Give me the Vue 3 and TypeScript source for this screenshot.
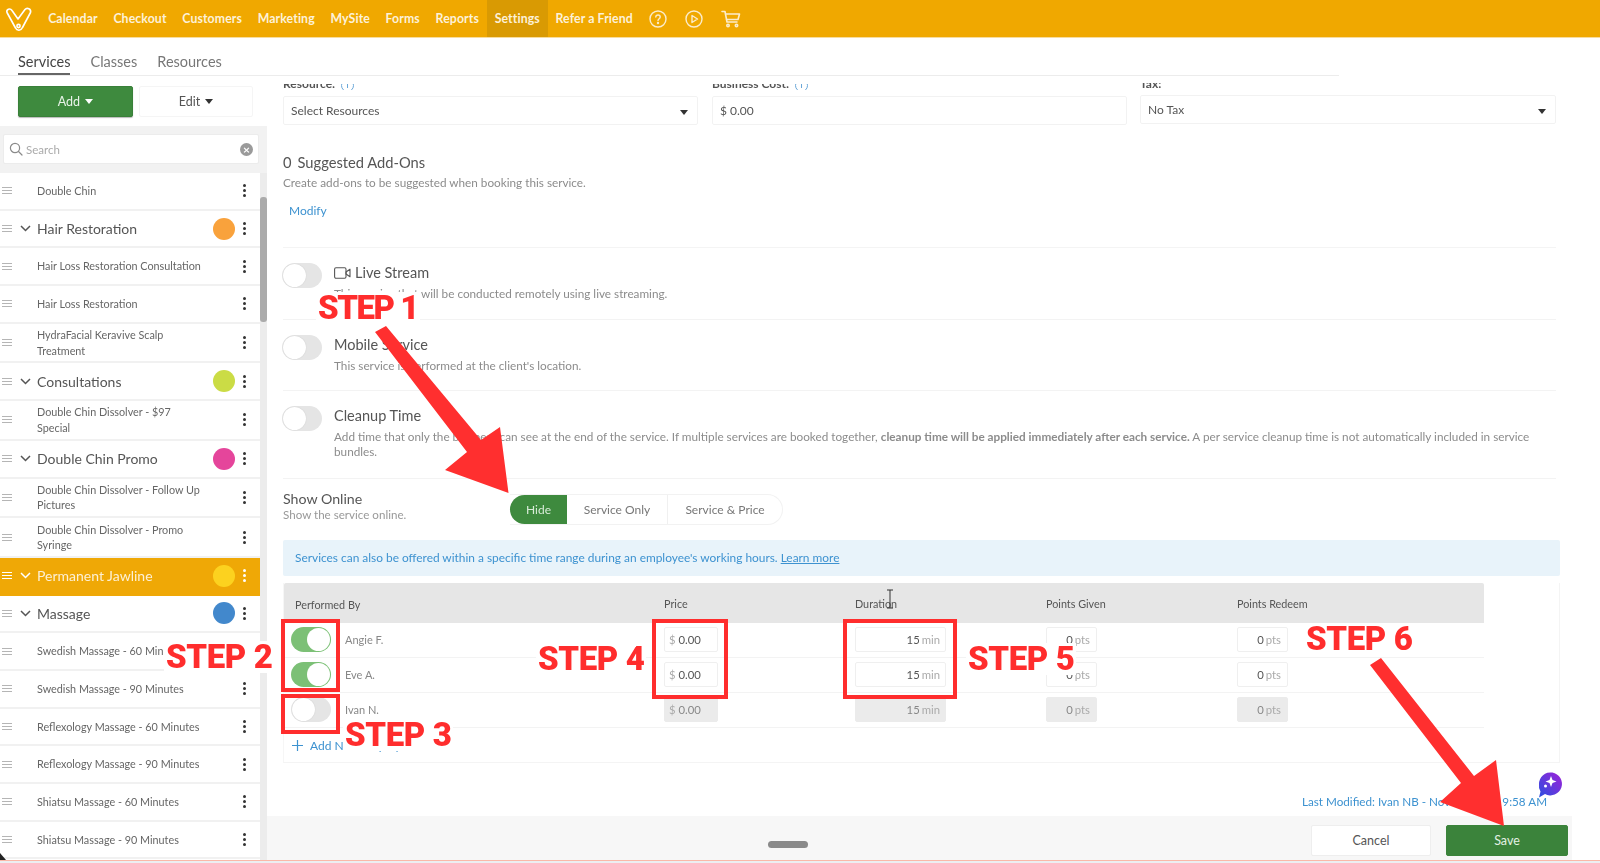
<script setup lang="ts">
interface Row { label: string; group?: boolean; color?: string; active?: boolean; tall?: boolean }
const navItems = ['Calendar', 'Checkout', 'Customers', 'Marketing', 'MySite', 'Forms', 'Reports', 'Settings', 'Refer a Friend']
const rows: Row[] = [
  { label: 'Double Chin' },
  { label: 'Hair Restoration', group: true, color: '#f9a23c' },
  { label: 'Hair Loss Restoration Consultation' },
  { label: 'Hair Loss Restoration' },
  { label: 'HydraFacial Keravive Scalp Treatment', tall: true },
  { label: 'Consultations', group: true, color: '#cbdc45' },
  { label: 'Double Chin Dissolver - $97 Special', tall: true },
  { label: 'Double Chin Promo', group: true, color: '#e5459b' },
  { label: 'Double Chin Dissolver - Follow Up Pictures', tall: true },
  { label: 'Double Chin Dissolver - Promo Syringe', tall: true },
  { label: 'Permanent Jawline', group: true, color: '#fcd21f', active: true },
  { label: 'Massage', group: true, color: '#4288cc' },
  { label: 'Swedish Massage - 60 Minutes' },
  { label: 'Swedish Massage - 90 Minutes' },
  { label: 'Reflexology Massage - 60 Minutes' },
  { label: 'Reflexology Massage - 90 Minutes' },
  { label: 'Shiatsu Massage - 60 Minutes' },
  { label: 'Shiatsu Massage - 90 Minutes' },
]
const staff = [
  { name: 'Angie F.', on: true },
  { name: 'Eve A.', on: true },
  { name: 'Ivan N.', on: false },
]
const steps = [
  { id: 's1', text: 'STEP 1' },
  { id: 's2', text: 'STEP 2' },
  { id: 's3', text: 'STEP 3' },
  { id: 's4', text: 'STEP 4' },
  { id: 's5', text: 'STEP 5' },
  { id: 's6', text: 'STEP 6' },
]
const boxes = ['b1', 'b2', 'b3', 'b4']
</script>

<template>
  <div class="page">
    <div class="base">
      <header class="topbar">
        <svg class="logo" width="30" height="26" viewBox="0 0 30 26" fill="none" stroke="#fff" stroke-width="1.6" stroke-linejoin="round" stroke-linecap="round">
          <path d="M3 6.5C2 3.5 6 1.5 8 4.5L14 13L21 3.5C23 1 27.5 3 26.5 6.5L18.5 21.5C17 25 13 25 11.5 22Z" />
          <circle cx="14.5" cy="20" r="1.6" />
        </svg>
        <nav class="nav">
          <a v-for="n in navItems" :key="n" class="nav-item" :class="{ current: n === 'Settings' }">{{ n }}</a>
        </nav>
        <div class="nav-icons">
          <svg width="18" height="18" viewBox="0 0 18 18" fill="none" stroke="#fbeccb" stroke-width="1.4" stroke-linecap="round">
            <circle cx="9" cy="9" r="8" />
            <path d="M6.8 7C6.9 4.4 11.2 4.4 11.2 7C11.2 8.8 9 8.6 9 10.6" />
            <circle cx="9" cy="13" r=".5" />
          </svg>
          <svg width="18" height="18" viewBox="0 0 18 18" fill="none" stroke="#fbeccb" stroke-width="1.4" stroke-linejoin="round">
            <circle cx="9" cy="9" r="8" />
            <path d="M7 5.5L12.5 9L7 12.5Z" />
          </svg>
          <svg width="20" height="18" viewBox="0 0 20 18" fill="none" stroke="#fbeccb" stroke-width="1.6" stroke-linejoin="round" stroke-linecap="round">
            <path d="M1 1.5H4L6 12H16" />
            <path d="M4.6 4H18.5L17 9.5H5.6" />
            <circle cx="7" cy="15.5" r="1.2" />
            <circle cx="15.5" cy="15.5" r="1.2" />
          </svg>
        </div>
      </header>

      <div class="tabs">
        <a class="tab selected">Services</a>
        <a class="tab">Classes</a>
        <a class="tab">Resources</a>
      </div>

      <div class="body">
        <aside class="sidebar">
          <div class="actions">
            <button class="btn-add">Add <span class="caret"></span></button>
            <button class="btn-edit">Edit <span class="caret dark"></span></button>
          </div>
          <div class="search-wrap">
            <div class="search">
              <svg width="14" height="14" viewBox="0 0 14 14" fill="none" stroke="#8a8a8a" stroke-width="1.2" stroke-linecap="round">
                <circle cx="6" cy="6" r="4.6" />
                <path d="M9.5 9.5L13 13" />
              </svg>
              <span class="search-text">Search</span>
              <span class="clear">×</span>
            </div>
          </div>
          <div class="list-wrap">
            <ul class="list">
              <li v-for="r in rows" :key="r.label" class="row" :class="{ group: r.group, active: r.active, tall: r.tall }">
                <span class="grip"><i></i><i></i><i></i></span>
                <svg v-if="r.group" class="chev" width="11" height="7" viewBox="0 0 11 7" fill="none" stroke="currentColor" stroke-width="1.5">
                  <path d="M1 1L5.5 5.5L10 1" />
                </svg>
                <span class="row-label">{{ r.label }}</span>
                <span v-if="r.color" class="dot" :style="{ background: r.color }"></span>
                <span class="kebab"><i></i><i></i><i></i></span>
              </li>
            </ul>
            <div class="track"><div class="thumb"></div></div>
          </div>
        </aside>

        <main class="main">
          <div class="content">
            <div class="fields">
              <div class="field f-res">
                <div class="clip"><span class="lab">Resource: <span class="info">i</span></span></div>
                <div class="input">Select Resources<span class="caret dark end"></span></div>
              </div>
              <div class="field f-cost">
                <div class="clip"><span class="lab">Business Cost: <span class="info">i</span></span></div>
                <div class="input">$ 0.00</div>
              </div>
              <div class="field f-tax">
                <div class="clip"><span class="lab">Tax:</span></div>
                <div class="input">No Tax<span class="caret dark end"></span></div>
              </div>
            </div>

            <h3 class="addons"><span class="count">0</span>Suggested Add-Ons</h3>
            <p class="desc addons-d">Create add-ons to be suggested when booking this service.</p>
            <a class="modify">Modify</a>
            <div class="rule first"></div>

            <section class="option">
              <span class="toggle"></span>
              <div>
                <div class="opt-title">
                  <svg width="17" height="12" viewBox="0 0 17 12" fill="none" stroke="#555" stroke-width="1.1" stroke-linejoin="round">
                    <rect x=".6" y=".8" width="11.4" height="10.4" rx="1.4" />
                    <path d="M12 5L16 2.2V9.8L12 7Z" />
                  </svg>
                  Live Stream
                </div>
                <p class="desc">This service that will be conducted remotely using live streaming.</p>
              </div>
            </section>
            <section class="option">
              <span class="toggle"></span>
              <div>
                <div class="opt-title">Mobile Service</div>
                <p class="desc">This service is performed at the client's location.</p>
              </div>
            </section>
            <section class="option last">
              <span class="toggle"></span>
              <div>
                <div class="opt-title">Cleanup Time</div>
                <p class="desc">Add time that only the business can see at the end of the service. If multiple services are booked together, <b>cleanup time will be applied immediately after each service.</b> A per service cleanup time is not automatically included in service bundles.</p>
              </div>
            </section>

            <section class="online">
              <div class="online-text">
                <div class="online-title">Show Online</div>
                <div class="online-sub">Show the service online.</div>
              </div>
              <div class="seg">
                <span class="seg-a">Hide</span>
                <span class="seg-b">Service Only</span>
                <span class="seg-c">Service &amp; Price</span>
              </div>
            </section>

            <div class="banner">Services can also be offered within a specific time range during an employee's working hours. <u>Learn more</u></div>

            <div class="table">
              <div class="thead">
                <span class="performed">Performed By</span>
                <span>Price</span>
                <span>Duration</span>
                <span>Points Given</span>
                <span>Points Redeem</span>
              </div>
              <div v-for="s in staff" :key="s.name" class="trow" :class="{ off: !s.on }">
                <div class="who">
                  <span class="toggle" :class="{ on: s.on }"></span>
                  <span class="who-name">{{ s.name }}</span>
                </div>
                <div><div class="cell c-price"><span class="unit">$</span>&nbsp;0.00</div></div>
                <div><div class="cell c-dur">15<span class="unit">min</span></div></div>
                <div><div class="cell c-pts">0<span class="unit">pts</span></div></div>
                <div><div class="cell c-pts">0<span class="unit">pts</span></div></div>
              </div>
              <div class="add-row">
                <svg width="11" height="11" viewBox="0 0 11 11" stroke="#3d92d0" stroke-width="1.2"><path d="M5.5 0V11M0 5.5H11" /></svg>
                <span>Add New Employee</span>
              </div>
            </div>

            <div class="modified">Last Modified: Ivan NB - Nov 21, 2024 9:58 AM</div>
          </div>

          <footer class="footer">
            <span class="handle"></span>
            <button class="btn-cancel">Cancel</button>
            <button class="btn-save">Save</button>
          </footer>
        </main>
      </div>
      <div class="bottom-strip"></div>
    </div>

    <svg class="overlay" width="1600" height="863" viewBox="0 0 1600 863">
      <defs>
        <linearGradient id="chat" x1="0" y1="1" x2="1" y2="0">
          <stop offset="0" stop-color="#2a4fe0" />
          <stop offset="1" stop-color="#a020d8" />
        </linearGradient>
      </defs>
      <path d="M1539 784a11.5 11.5 0 1 1 6 10l-6 3.500 1.500-6a11 11 0 0 1-1.500-7.500Z" fill="url(#chat)" />
      <path d="M1551 776l1.500 4 4 1.500-4 1.500-1.500 4-1.500-4-4-1.500 4-1.500Z" fill="#fff" />
      <circle cx="1545.500" cy="786" r="1.500" fill="#fff" />
      <path d="M375 332L386 326L481 440L500 427L508.500 493L445 470L467 452Z" fill="#ff2f2f" />
      <path d="M1370 665L1381 658L1474 776L1496 760L1504 826L1440 802L1461 783Z" fill="#ff2f2f" />
      <path d="M887 590H893M890 590V608M887 608H893" stroke="#333" stroke-width="1" fill="none" />
      <path d="M0 853L6 860H0Z" fill="#222" />
    </svg>
    <span v-for="b in boxes" :key="b" class="redbox" :class="b"></span>
    <span v-for="s in steps" :key="s.id" class="step" :class="s.id">{{ s.text }}</span>
  </div>
</template>

<style>
html, body { margin: 0; padding: 0; background: #fff; }
</style>

<style scoped>
.page {
  position: relative;
  width: 1600px;
  height: 863px;
  overflow: hidden;
  background: #fff;
  font-family: Lato, "Open Sans", sans-serif;
  color: #555;
}
.base {
  width: 1600px;
  height: 863px;
  display: flex;
  flex-direction: column;
  filter: blur(0.45px);
}
.topbar {
  height: 37px;
  flex: none;
  display: flex;
  align-items: center;
  background: #f0a800;
  border-bottom: 1px solid #f7dc9f;
}
.logo { margin-left: 4px; margin-right: 6.300px; flex: none; }
.nav { display: flex; height: 100%; }
.nav-item {
  display: flex;
  align-items: center;
  padding: 0 7.850px;
  font-size: 12.300px;
  font-weight: 700;
  letter-spacing: 0.1px;
  color: #fdf1d8;
}
.nav-item.current { background: #d99a03; }
.nav-icons { display: flex; align-items: center; gap: 18px; margin-left: 8px; }

.tabs {
  height: 38px;
  flex: none;
  width: 1339px;
  display: flex;
  align-items: flex-end;
  padding-left: 18px;
  box-sizing: border-box;
  gap: 20px;
  border-bottom: 1px solid #ececec;
}
.tab { font-size: 14.500px; color: #777; line-height: 20px; height: 37px; padding-top: 14px; box-sizing: border-box; }
.tab.selected { color: #444; border-bottom: 2px solid #666; }

.body { flex: 1; min-height: 0; display: flex; }

.sidebar { width: 267px; flex: none; display: flex; flex-direction: column; min-height: 0; }
.actions { display: flex; padding: 10px 0 0 18px; gap: 6px; height: 40px; }
.actions button { font-family: inherit; font-size: 12.500px; height: 31px; width: 115px; border-radius: 2px; }
.btn-add { background: #3e8a3e; color: #e9f3e9; border: 1px solid #398039; box-shadow: 0 1px 1px #bbb; }
.actions .btn-edit { background: #fff; color: #555; border: 1px solid #f5f5f5; width: 114px; }
.caret { display: inline-block; width: 0; height: 0; border-left: 4px solid transparent; border-right: 4px solid transparent; border-top: 5px solid #fff; margin-left: 2px; vertical-align: 2px; }
.caret.dark { border-top-color: #333; }
.caret.end { position: absolute; right: 9px; top: 13px; }

.search-wrap { height: 47px; background: #f2f2f2; padding: 8px 8px 0 3px; box-sizing: border-box; flex: none; }
.search { height: 30px; box-sizing: border-box; background: #fff; border: 1px solid #ececec; border-radius: 2px; display: flex; align-items: center; padding: 0 5px; gap: 3px; font-size: 11.500px; color: #aaa; }
.search-text { flex: 1; }
.clear { width: 13px; height: 13px; border-radius: 50%; background: #9a9a9a; color: #fff; font-size: 12px; line-height: 13px; text-align: center; font-weight: 700; }

.list-wrap { flex: 1; min-height: 0; display: flex; overflow: hidden; }
.list { list-style: none; margin: 0; padding: 0; width: 260px; flex: none; }
.track { width: 7px; background: #ececec; flex: none; padding-top: 24px; box-sizing: border-box; }
.thumb { height: 125px; background: #ababab; border-radius: 3px; }
.row {
  height: 37.700px;
  box-sizing: border-box;
  display: flex;
  align-items: center;
  padding-left: 2px;
  border-bottom: 2px solid #f1f1f1;
  font-size: 10.800px;
  line-height: 15.500px;
  color: #666;
}
.row.tall { height: 39.700px; }
.row.group { font-size: 14px; color: #555; }
.row.active { background: #efa806; color: #fdf0d5; border-bottom-color: #efa806; }
.grip { width: 10px; flex: none; display: flex; flex-direction: column; gap: 2px; margin-right: 8px; }
.grip i { display: block; height: 1px; background: #b5b5b5; }
.row.active .grip i { background: #fff; }
.chev { flex: none; margin-right: 6px; color: #555; }
.row.active .chev { color: #fff; }
.row:not(.group) .row-label { margin-left: 17px; flex: none; width: 167px; }
.row-label { flex: 1; }
.dot { width: 22px; height: 22px; border-radius: 50%; flex: none; margin-right: 8px; }
.kebab { width: 4px; flex: none; display: flex; flex-direction: column; gap: 2px; margin-right: 13px; margin-left: auto; }
.kebab i { display: block; width: 3px; height: 3px; border-radius: 50%; background: #333; }
.row.active .kebab i { background: #fff; }

.main { flex: 1; min-width: 0; display: flex; flex-direction: column; }
.content { flex: 1; min-height: 0; padding: 8px 44px 0 16px; position: relative; }
.fields { display: flex; gap: 13px; }
.field { flex: none; position: relative; }
.f-res { width: 415px; margin-right: 1px; }
.f-cost { width: 415px; }
.f-tax { width: 416px; margin-top: -1px; }
.clip { height: 6px; overflow: hidden; margin-bottom: 6px; position: relative; }
.lab { position: absolute; left: 0; bottom: -2px; font-size: 12px; line-height: 14px; font-weight: 700; color: #555; white-space: nowrap; }
.info { display: inline-block; width: 11px; height: 11px; border: 1px solid #6aa7d8; border-radius: 50%; font-size: 8px; line-height: 11px; text-align: center; color: #6aa7d8; margin-left: 3px; }
.input { position: relative; height: 29px; box-sizing: border-box; border: 1px solid #f2f2f2; border-radius: 2px; font-size: 12px; line-height: 28px; padding-left: 7px; color: #555; }

.addons { margin: 27px 0 0; font-size: 14.700px; line-height: 20px; font-weight: 400; color: #555; }
.count { margin-right: 6px; }
.desc { margin: 0; font-size: 11.750px; line-height: 15px; color: #8c8c8c; }
.addons-d { margin-top: 3px; line-height: 16px; }
.modify { display: block; margin: 12px 0 0 6px; font-size: 12px; line-height: 16px; color: #3d92d0; }
.rule.first { height: 1px; background: #f4f4f4; margin-top: 28px; }

.option { display: flex; gap: 12px; padding: 14px 0 17.500px; border-bottom: 1px solid #f3f3f3; }
.option.last { padding-bottom: 18.500px; }
.option > .toggle { margin-left: -1px; margin-top: 1px; }
.opt-title { font-size: 14.500px; line-height: 20px; color: #555; margin: 1px 0 3px; display: flex; align-items: center; gap: 4px; }
.toggle {
  width: 40px;
  height: 25px;
  flex: none;
  box-sizing: border-box;
  border-radius: 13px;
  background: #e5e5e5;
  position: relative;
  display: block;
}
.toggle::after {
  content: "";
  position: absolute;
  left: 1px;
  top: 1px;
  width: 23px;
  height: 23px;
  border-radius: 50%;
  background: #fff;
  box-shadow: 0 0 1px #bbb;
}
.toggle.on { background: #7cc076; }
.toggle.on::after { left: auto; right: 1px; box-shadow: 0 0 1px #7cc076; }

.online { display: flex; height: 61px; padding-top: 12px; box-sizing: border-box; }
.online-text { width: 227px; flex: none; }
.online-title { font-size: 14.200px; line-height: 16px; color: #555; }
.online-sub { font-size: 11.600px; line-height: 15px; color: #999; }
.seg { display: flex; height: 31px; margin-top: 3px; border: 1px solid #f2f2f2; border-left: 0; border-radius: 0 16px 16px 0; font-size: 12px; line-height: 29px; color: #777; box-sizing: border-box; }
.seg span { text-align: center; box-sizing: border-box; }
.seg-a { width: 57px; background: #3e8a3e; color: #d8ebd8; border-radius: 16px 0 0 16px; }
.seg-b { width: 101px; border-right: 1px solid #f0f0f0; }
.seg-c { width: 114px; }

.banner { height: 36px; background: #e8f3fa; margin-right: -4px; padding-left: 12px; font-size: 11.900px; line-height: 36px; color: #3d92d0; border-radius: 2px; }

.table { margin: 7px -4px 0 0; border: 1px solid #f4f4f4; border-top: 0; border-left: 1px solid #f6f6f6; height: 180px; box-sizing: border-box; }
.thead, .trow { width: 1200px; display: grid; grid-template-columns: 380px 191px 191px 191px 247px; }
.thead { height: 40px; background: #e6e6e6; align-items: center; font-size: 10.800px; color: #555; border-radius: 2px 2px 0 0; padding-top: 1px; box-sizing: border-box; }
.performed { padding-left: 11px; padding-top: 2px; }
.trow { height: 35px; box-sizing: border-box; padding-top: 4px; border-bottom: 1px solid #f3f3f3; }
.who { display: flex; align-items: flex-start; padding-left: 7px; gap: 14px; }
.who-name { font-size: 11px; line-height: 25px; color: #888; }
.cell { height: 25px; box-sizing: border-box; border: 1px solid #efefef; border-radius: 2px; font-size: 11.300px; line-height: 23px; color: #555; background: #fff; }
.trow.off .cell { background: #ebebeb; border-color: #ebebeb; color: #888; }
.unit { color: #aaa; margin-left: 2px; }
.c-price .unit { margin-left: 0; }
.c-price { width: 54px; padding-left: 4px; }
.c-dur { width: 91px; text-align: right; padding-right: 5px; }
.c-pts { width: 51px; text-align: right; padding-right: 6px; }
.add-row { height: 35px; display: flex; align-items: center; gap: 7px; padding-left: 8px; font-size: 12px; color: #3d92d0; }

.modified { position: absolute; right: 53px; top: 717px; font-size: 11.700px; line-height: 16px; color: #3d92d0; white-space: nowrap; }

.footer { height: 44px; flex: none; margin-right: 28px; background: #f7f7f7; display: flex; justify-content: flex-end; gap: 15px; padding: 9px 4px 0 0; box-sizing: border-box; position: relative; }
.handle { position: absolute; left: 501px; top: 25px; width: 40px; height: 7px; border-radius: 4px; background: #8a8a8a; }
.footer button { height: 31px; font-family: inherit; font-size: 12.500px; border-radius: 2px; }
.btn-cancel { width: 120px; background: #fff; color: #555; border: 1px solid #eee; }
.btn-save { width: 122px; background: #3b833b; color: #e3f0e3; border: 1px solid #3b833b; }

.bottom-strip { height: 3px; flex: none; background: #eceff2; border-top: 1px solid #fbb8a8; box-sizing: border-box; }

.overlay { position: absolute; left: 0; top: 0; pointer-events: none; }
.redbox { position: absolute; border: 4px solid #ff2d2d; box-sizing: border-box; }
.b1 { left: 281px; top: 619px; width: 59px; height: 73px; }
.b2 { left: 281px; top: 694px; width: 59px; height: 40px; }
.b3 { left: 652px; top: 619px; width: 76px; height: 80px; }
.b4 { left: 843px; top: 619px; width: 114px; height: 80px; }
.step {
  position: absolute;
  background: #fff;
  color: #ff2d2d;
  font-family: Roboto, "Liberation Sans", sans-serif;
  font-weight: 900;
  font-size: 33px;
  letter-spacing: -0.4px;
  line-height: 32px;
  padding: 0 2px;
  white-space: nowrap;
}
.s1 { left: 316px; top: 292px; letter-spacing: -1.500px; }
.s2 { left: 164px; top: 641px; }
.s3 { left: 343px; top: 719px; }
.s4 { left: 536px; top: 643px; }
.s5 { left: 966px; top: 643px; }
.s6 { left: 1304px; top: 623px; }
</style>
